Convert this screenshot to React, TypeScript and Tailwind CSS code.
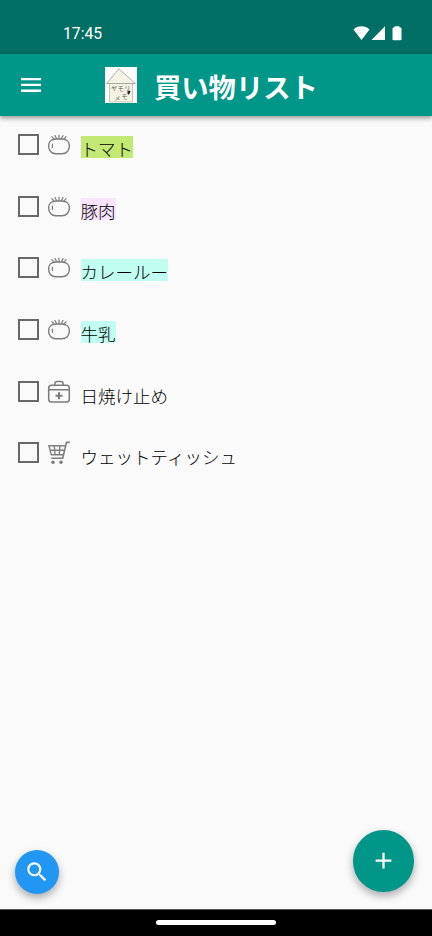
import { clsx } from 'clsx';

type Category = 'food' | 'medicine' | 'goods';

interface Item {
  id: number;
  name: string;
  category: Category;
  highlight?: string;
}

const items: Item[] = [
  { id: 1, name: 'トマト', category: 'food', highlight: 'bg-[#c1e973]' },
  { id: 2, name: '豚肉', category: 'food', highlight: 'bg-[#fbe4fd]' },
  { id: 3, name: 'カレールー', category: 'food', highlight: 'bg-[#c2fdf2]' },
  { id: 4, name: '牛乳', category: 'food', highlight: 'bg-[#c2fdf2]' },
  { id: 5, name: '日焼け止め', category: 'medicine' },
  { id: 6, name: 'ウェットティッシュ', category: 'goods' },
];

function TomatoIcon() {
  return (
    <svg viewBox="0 0 24 24" className="size-6" fill="none" stroke="#7c7c7c" strokeWidth="1.4" strokeLinecap="round">
      <path d="M9 6h6c4.600 0 7.400 2.800 7.400 7s-2.800 7.700-7.400 7.700H9c-4.600 0-7.400-3.500-7.400-7.700S4.400 6 9 6z" />
      <path d="M5.400 11v3.500" strokeWidth="1.200" />
      <path d="M7 5.800 4.900 3.600M9.500 5.600 8 2.600M12 5.600V2.200M14.500 5.600l1.500-3M17 5.800l2.100-2.200" strokeWidth="1.200" />
    </svg>
  );
}

function MedicineIcon() {
  return (
    <svg viewBox="0 0 24 24" className="size-6" fill="none" stroke="#7c7c7c" strokeWidth="1.500">
      <rect x="1.700" y="5.200" width="20.600" height="16.800" rx="2.800" />
      <path d="M8 5.200V3.500c0-1.300.8-2.100 2.100-2.100h3.800c1.300 0 2.100.8 2.100 2.100v1.700M1.700 9.700h20.600" />
      <path d="M12 12.300v7M8.500 15.800h7" strokeWidth="2" />
    </svg>
  );
}

function CartIcon() {
  return (
    <svg viewBox="0 0 24 24" className="size-6" fill="none" stroke="#808080" strokeWidth="1.400">
      <path d="M22.800 1.400h-3.300l-3.800 15.900H4.200" strokeWidth="1.600" />
      <path d="M18.300 4.700H1.900l2.400 9h12.200M3 9.200h14.200M7.200 4.700l.9 9M12.900 4.700l-.6 9" />
      <circle cx="6" cy="21.200" r="1.700" fill="#7c7c7c" stroke="none" />
      <circle cx="14" cy="21.200" r="1.700" fill="#7c7c7c" stroke="none" />
    </svg>
  );
}

function CategoryIcon({ category }: { category: Category }) {
  if (category === 'medicine') return <MedicineIcon />;
  if (category === 'goods') return <CartIcon />;
  return <TomatoIcon />;
}

function StatusBar() {
  return (
    <div className="flex h-[54px] items-start justify-between bg-[#016f65] pl-[63px] pr-[29px] pt-[24px] text-white">
      <span className="font-[Roboto,sans-serif] text-[15.700px] leading-5">17:45</span>
      <svg viewBox="0 0 50 16" className="mt-[1px] h-4 w-[50px]" fill="white">
        <path d="M.5 4.500C2.800 2.300 5.300 1.200 8.500 1.200s5.700 1.100 8 3.300L8.500 15z" />
        <path d="M32 1.300V15H18.500z" />
        <path d="M41.500 1.200h5v1.200h.8c.8 0 1.200.4 1.200 1.200v10.400c0 .8-.4 1.200-1.200 1.200h-6.600c-.8 0-1.200-.4-1.200-1.200V3.600c0-.8.4-1.200 1.200-1.200h.8z" />
      </svg>
    </div>
  );
}

function Logo() {
  return (
    <svg viewBox="0 0 32 36" className="h-9 w-8" fontFamily="'Noto Sans CJK JP', sans-serif" fill="#4e5a50">
      <rect width="32" height="36" fill="#fff" />
      <path d="M4.500 16.500h23V35h-23z" fill="#f5f3e4" stroke="#b9b8aa" strokeWidth=".8" />
      <path d="M13.800 1.800 30.300 16.500H1.700z" fill="#f5f3e4" stroke="#9b9a8e" strokeWidth=".8" />
      <text x="6" y="24" fontSize="6.500" transform="rotate(-6 9 22)">ヤ</text>
      <text x="12.800" y="24" fontSize="6">モ</text>
      <text x="19.500" y="23" fontSize="6">リ</text>
      <text x="9.500" y="32.500" fontSize="6">メ</text>
      <text x="16.500" y="31.800" fontSize="6">モ</text>
      <path d="m22.300 24.500 1.700-1 1.500.8-.7 2-1 1.500-1.200-1z" fill="#222" />
    </svg>
  );
}

function AppBar() {
  return (
    <header className="relative flex h-[62px] items-center bg-[#009688] shadow-[0_2px_5px_rgba(0,0,0,0.42)]">
      <svg viewBox="0 0 20 14" className="ml-[21px] h-[14px] w-5" fill="white">
        <path d="M0 0h20v2.300H0zM0 5.800h20v2.300H0zM0 11.600h20v2.300H0z" />
      </svg>
      <div className="ml-16">
        <Logo />
      </div>
      <h1 className="ml-[17px] mt-[2px] font-['Noto_Sans_CJK_JP',sans-serif] text-[27.300px] font-bold leading-10 text-white">
        買い物リスト
      </h1>
    </header>
  );
}

function ItemRow({ item }: { item: Item }) {
  return (
    <li className="flex h-[61.650px] items-start pl-[18px] pt-[18px]">
      <span className="size-[21px] border-2 border-[#686868]" />
      <span className="ml-2 -mt-[1px]">
        <CategoryIcon category={item.category} />
      </span>
      <span className={clsx('ml-[9.500px] mt-[2px] h-[22px] text-[17.500px] leading-[26px]', item.highlight)}>
        {item.name}
      </span>
    </li>
  );
}

export default function App() {
  return (
    <div className="flex h-[936px] w-[432px] flex-col overflow-hidden bg-[#fafafa]">
      <StatusBar />
      <AppBar />

      <ul className="flex-1 font-['Noto_Sans_CJK_JP',sans-serif] font-light text-black">
        {items.map((item) => (
          <ItemRow key={item.id} item={item} />
        ))}
      </ul>

      {/* Floating actions */}
      <div className="flex items-end justify-between pb-[15px] pl-[15px] pr-[18px]">
        <button className="grid size-[44px] place-items-center rounded-full bg-[#2196f3] shadow-[0_4px_8px_rgba(0,0,0,0.32)]">
          <svg viewBox="0 0 24 24" className="size-[26px]" fill="white">
            <path d="M15.500 14h-.79l-.28-.27A6.471 6.471 0 0 0 16 9.500 6.500 6.500 0 1 0 9.500 16c1.610 0 3.090-.59 4.230-1.570l.27.28v.79l5 4.990L20.490 19l-4.990-5zm-6 0C7.010 14 5 11.990 5 9.500S7.010 5 9.500 5 14 7.010 14 9.500 11.990 14 9.500 14z" />
          </svg>
        </button>
        <button className="mb-[2.500px] grid size-[61.500px] place-items-center rounded-full bg-[#009688] shadow-[0_4px_9px_rgba(0,0,0,0.32)]">
          <svg viewBox="0 0 24 24" className="size-[27px]" fill="white">
            <path d="M19 13h-6v6h-2v-6H5v-2h6V5h2v6h6z" />
          </svg>
        </button>
      </div>

      {/* Gesture bar */}
      <div className="flex h-[27px] justify-center border-t border-[#555] bg-black pt-[10px]">
        <div className="h-[5px] w-[120px] rounded-full bg-white" />
      </div>
    </div>
  );
}
